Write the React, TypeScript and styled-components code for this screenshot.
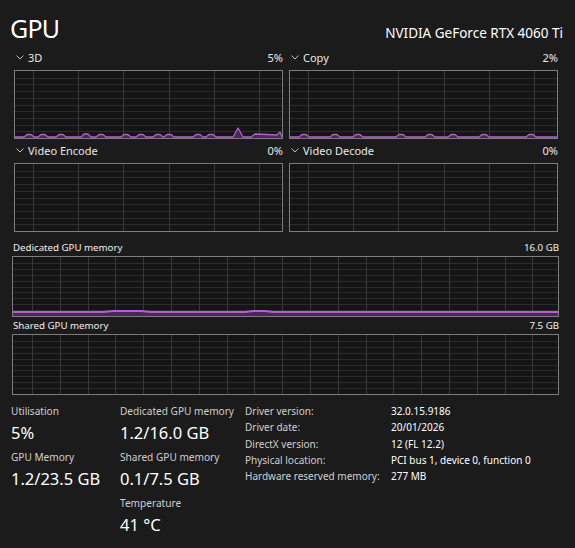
import { Fragment } from "react";
import styled, { createGlobalStyle } from "styled-components";

const GlobalStyle = createGlobalStyle`
  html, body {
    margin: 0;
    padding: 0;
    background: #1b1b1b;
  }
  body {
    font-family: "Segoe UI", "Noto Sans", "Liberation Sans", sans-serif;
    color: #ffffff;
  }
`;

const Page = styled.div`
  width: 575px;
  height: 548px;
  box-sizing: border-box;
  padding: 10px 17px 0 10px;
  background: #1b1b1b;
  overflow: hidden;
`;

const Header = styled.div`
  display: flex;
  justify-content: space-between;
  align-items: baseline;
  height: 38px;
`;

const Title = styled.h1`
  margin: 0;
  font-size: 25px;
  font-weight: 400;
  line-height: 36px;
  letter-spacing: -0.8px;
`;

const DeviceName = styled.div`
  font-size: 13.5px;
  margin-right: -5px;
`;

const EngineGrid = styled.div`
  display: grid;
  grid-template-columns: 269px 269px;
  column-gap: 6px;
  row-gap: 2px;
  margin-left: 4px;
`;

const Panel = styled.div`
  display: flex;
  flex-direction: column;
`;

const PanelHead = styled.div`
  display: flex;
  align-items: center;
  justify-content: space-between;
  height: 22px;
  padding-bottom: 3px;
  box-sizing: border-box;
  font-size: 11px;
  color: #e8e8e8;
`;

const PanelName = styled.div`
  display: flex;
  align-items: center;
  gap: 4px;
  padding-left: 2px;
`;

const GraphBox = styled.div<{ $h: number }>`
  height: ${(p) => p.$h}px;
  border: 1px solid #7c7c7c;
  background: #151515;
  svg {
    display: block;
  }
`;

const MemSection = styled.div`
  display: flex;
  flex-direction: column;
  margin-top: 7px;
  margin-left: 2px;
  width: 547px;
`;

const MemHead = styled.div`
  display: flex;
  justify-content: space-between;
  align-items: center;
  height: 17px;
  font-size: 9.7px;
  color: #f0f0f0;
  padding-left: 1px;
`;

const Stats = styled.div`
  display: grid;
  grid-template-columns: 109px 125px 1fr;
  align-items: start;
  margin-top: 7px;
  margin-left: 1px;
`;

const StatCol = styled.div`
  display: flex;
  flex-direction: column;
`;

const StatLabel = styled.div`
  font-size: 10.1px;
  color: #cfcfcf;
  line-height: 18px;
`;

const StatValue = styled.div`
  font-size: 16.5px;
  line-height: 26px;
  color: #ffffff;
  margin-bottom: 2px;
`;

const Details = styled.div`
  display: grid;
  grid-template-columns: 146px 1fr;
  grid-auto-rows: 16.3px;
  align-items: center;
  font-size: 10px;
  margin-top: 1px;
`;

const DetailKey = styled.div`
  color: #cfcfcf;
`;

const DetailVal = styled.div`
  color: #ffffff;
`;

function Chevron() {
  return (
    <svg width="8" height="5" viewBox="0 0 8 5">
      <path d="M0.5 0.5 L4 4 L7.5 0.5" fill="none" stroke="#bdbdbd" strokeWidth="1" />
    </svg>
  );
}

type GraphProps = {
  w: number;
  h: number;
  colStart: number;
  colStep: number;
  rows: number;
  points?: [number, number][];
  thick?: boolean;
};

function Graph({ w, h, colStart, colStep, rows, points, thick }: GraphProps) {
  const cols: number[] = [];
  for (let x = colStart; x < w; x += colStep) cols.push(Math.round(x) + 0.5);
  const rowLines: number[] = [];
  for (let i = 1; i < rows; i++) rowLines.push(Math.round((h / rows) * i) + 0.5);
  const line = points ? points.map(([x, y]) => `${x},${y}`).join(" ") : "";
  const area = points ? `0,${h} ${line} ${w},${h}` : "";
  return (
    <GraphBox $h={h}>
      <svg width={w} height={h} viewBox={`0 0 ${w} ${h}`}>
        {rowLines.map((y) => (
          <line key={"r" + y} x1={0} x2={w} y1={y} y2={y} stroke="#2c2c2c" strokeWidth="1" />
        ))}
        {cols.map((x) => (
          <line key={"c" + x} x1={x} x2={x} y1={0} y2={h} stroke="#383838" strokeWidth="1" />
        ))}
        {points && (
          <>
            <polygon points={area} fill="#4a2856" />
            <polyline
              points={line}
              fill="none"
              stroke="#b35fd0"
              strokeWidth={thick ? 2 : 1.3}
              strokeLinejoin="round"
            />
          </>
        )}
      </svg>
    </GraphBox>
  );
}

// small activity bumps along the bottom edge of an engine graph
function bumps(w: number, h: number, xs: number[], peak: Record<number, number> = {}) {
  const base = h - 1;
  const pts: [number, number][] = [[0, base]];
  xs.forEach((x) => {
    const up = peak[x] ?? 2.5;
    pts.push([x - 5, base]);
    pts.push([x - 2, base - up]);
    pts.push([x + 2, base - up]);
    pts.push([x + 5, base]);
  });
  pts.push([w, base]);
  return pts;
}

const SMALL_W = 267;
const SMALL_H = 67;
const MEM_W = 545;
const MEM_H = 59;

const threeD: [number, number][] = [
  ...bumps(SMALL_W, SMALL_H, [14, 28, 46, 71, 86, 111, 126, 143, 154, 183, 196], { 71: 3 }).slice(0, -1),
  [218, 66],
  [223, 57],
  [228, 66],
  [236, 66],
  [240, 63],
  [252, 63.5],
  [262, 64],
  [265, 61],
  [SMALL_W, 66],
];
const copy = bumps(SMALL_W, SMALL_H, [14, 45, 68, 111, 140, 163, 194, 241], {});

const dedicated: [number, number][] = [
  [0, 55],
  [90, 55],
  [100, 54],
  [128, 54],
  [138, 55],
  [232, 55],
  [240, 54],
  [252, 54],
  [260, 55],
  [MEM_W, 55],
];

const engines = [
  { name: "3D", value: "5%", points: threeD },
  { name: "Copy", value: "2%", points: copy },
  { name: "Video Encode", value: "0%" },
  { name: "Video Decode", value: "0%" },
];

const details: [string, string][] = [
  ["Driver version:", "32.0.15.9186"],
  ["Driver date:", "20/01/2026"],
  ["DirectX version:", "12 (FL 12.2)"],
  ["Physical location:", "PCI bus 1, device 0, function 0"],
  ["Hardware reserved memory:", "277 MB"],
];

export default function App() {
  return (
    <>
      <GlobalStyle />
      <Page>
        <Header>
          <Title>GPU</Title>
          <DeviceName>NVIDIA GeForce RTX 4060 Ti</DeviceName>
        </Header>
        <EngineGrid>
          {engines.map((e) => (
            <Panel key={e.name}>
              <PanelHead>
                <PanelName>
                  <Chevron />
                  {e.name}
                </PanelName>
                <span>{e.value}</span>
              </PanelHead>
              <Graph w={SMALL_W} h={SMALL_H} colStart={18} colStep={45.2} rows={10} points={e.points} />
            </Panel>
          ))}
        </EngineGrid>
        <MemSection>
          <MemHead>
            <span>Dedicated GPU memory</span>
            <span>16.0 GB</span>
          </MemHead>
          <Graph w={MEM_W} h={MEM_H} colStart={19} colStep={27.8} rows={10} points={dedicated} thick />
          <MemHead>
            <span>Shared GPU memory</span>
            <span>7.5 GB</span>
          </MemHead>
          <Graph w={MEM_W} h={MEM_H} colStart={19} colStep={27.8} rows={10} />
        </MemSection>
        <Stats>
          <StatCol>
            <StatLabel>Utilisation</StatLabel>
            <StatValue>5%</StatValue>
            <StatLabel>GPU Memory</StatLabel>
            <StatValue>1.2/23.5 GB</StatValue>
          </StatCol>
          <StatCol>
            <StatLabel>Dedicated GPU memory</StatLabel>
            <StatValue>1.2/16.0 GB</StatValue>
            <StatLabel>Shared GPU memory</StatLabel>
            <StatValue>0.1/7.5 GB</StatValue>
            <StatLabel>Temperature</StatLabel>
            <StatValue>41 °C</StatValue>
          </StatCol>
          <Details>
            {details.map(([k, v]) => (
              <Fragment key={k}>
                <DetailKey>{k}</DetailKey>
                <DetailVal>{v}</DetailVal>
              </Fragment>
            ))}
          </Details>
        </Stats>
      </Page>
    </>
  );
}
